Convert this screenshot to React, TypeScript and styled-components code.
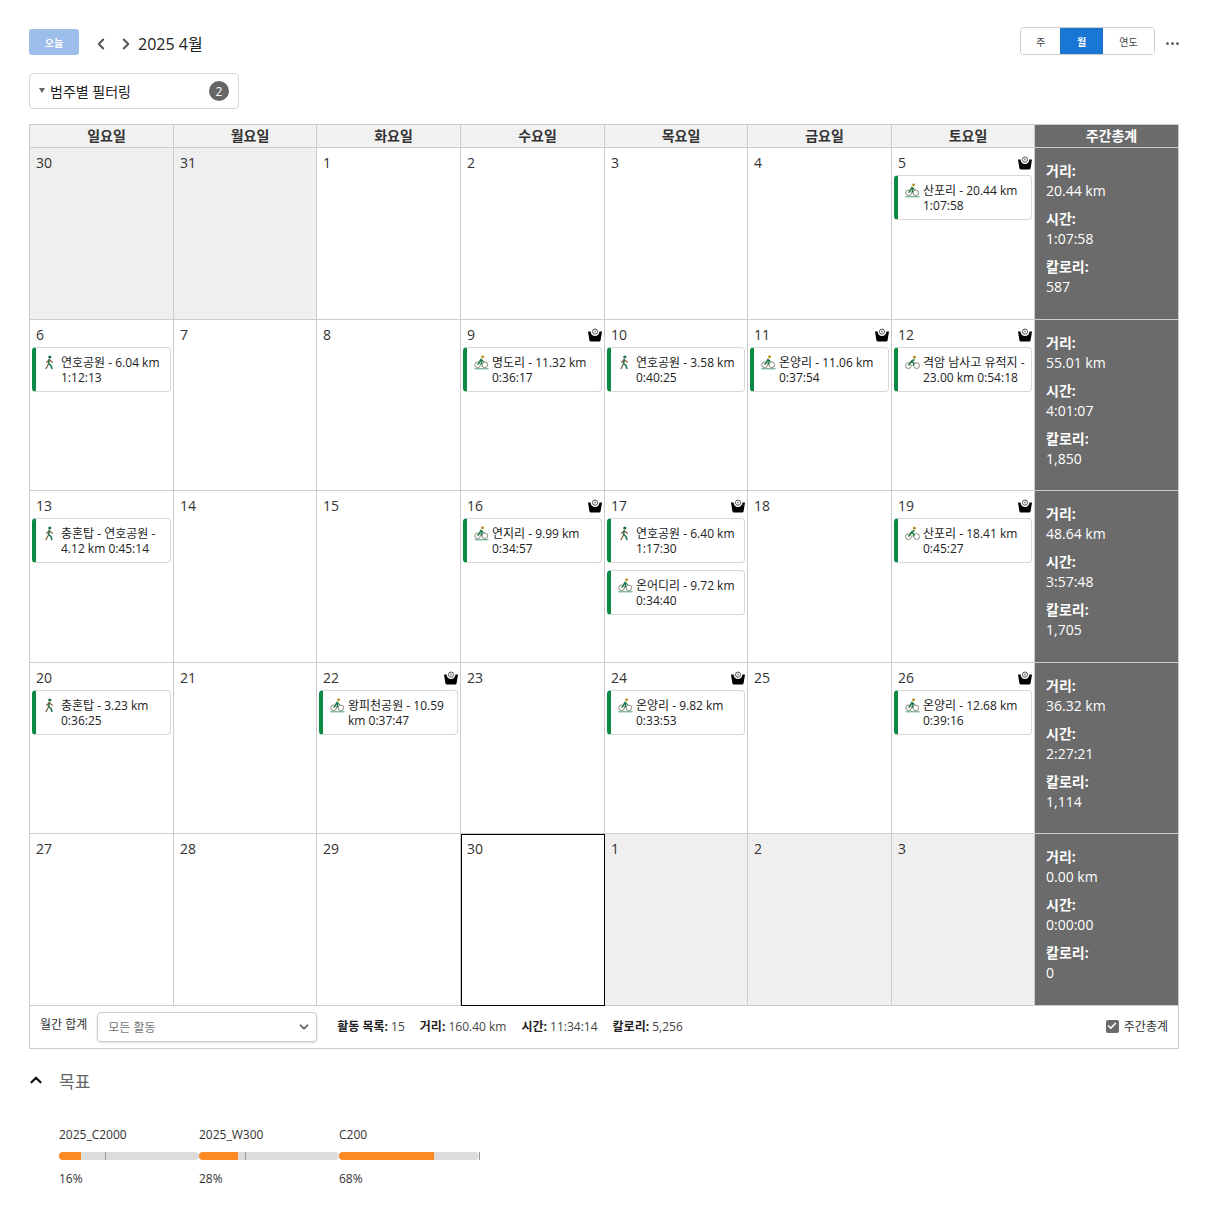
import React from "react";
import styled, { createGlobalStyle } from "styled-components";
import { ChevronLeft, ChevronRight, ChevronUp, ChevronDown, Check } from "lucide-react";

const GlobalStyle = createGlobalStyle`
  html, body {
    margin: 0;
    padding: 0;
    background: #fff;
    color: #222;
    font-family: "Open Sans", "Noto Sans CJK KR", sans-serif;
  }
`;

const Page = styled.div`
  width: 1150px;
  padding: 27px 30px 0 29px;
`;

const TopBar = styled.div`
  display: flex;
  align-items: center;
  height: 30px;
`;

const TodayButton = styled.button`
  width: 50px;
  height: 26px;
  margin: 0;
  border: none;
  border-radius: 3px;
  background: #9dbdea;
  color: #fff;
  font: 600 10px "Open Sans", "Noto Sans CJK KR", sans-serif;
  padding: 0;
`;

const NavIcon = styled.span`
  display: flex;
  width: 25px;
  justify-content: center;
  color: #555;
`;

const NavGroup = styled.div`
  display: flex;
  margin: 4px 0 0 9px;
`;

const MonthTitle = styled.h2`
  margin: 2px 0 0 0;
  font-size: 16px;
  font-weight: 400;
  color: #222;
`;

const ViewTools = styled.div`
  margin-left: auto;
  display: flex;
  align-items: center;
  margin-top: -2px;
`;

const ViewSwitch = styled.div`
  display: flex;
  height: 26px;
  border: 1px solid #ccc;
  border-radius: 4px;
  overflow: hidden;
`;

const ViewButton = styled.div<{ $active?: boolean; $w: number }>`
  width: ${(p) => p.$w}px;
  display: flex;
  align-items: center;
  justify-content: center;
  font-size: 10px;
  background: ${(p) => (p.$active ? "#1976d2" : "#fff")};
  color: ${(p) => (p.$active ? "#fff" : "#444")};
  font-weight: ${(p) => (p.$active ? 600 : 400)};
`;

const MoreDots = styled.div`
  display: flex;
  gap: 2px;
  margin-left: 11px;
  margin-top: 4px;
  width: 13px;
`;

const Dot = styled.i`
  width: 3px;
  height: 3px;
  border-radius: 50%;
  background: #666;
`;

const FilterBox = styled.div`
  box-sizing: border-box;
  width: 210px;
  height: 36px;
  margin-top: 16px;
  padding: 0 9px 0 9px;
  display: flex;
  align-items: center;
  border: 1px solid #d8d8d8;
  border-radius: 4px;
  font-size: 14px;
  color: #222;
`;

const Caret = styled.span`
  width: 0;
  height: 0;
  margin: -2px 5px 0 0;
  border-left: 3px solid transparent;
  border-right: 3px solid transparent;
  border-top: 5px solid #666;
`;

const CountBadge = styled.span`
  margin-left: auto;
  width: 20px;
  height: 20px;
  border-radius: 50%;
  background: #666;
  color: #fff;
  font-size: 12px;
  display: flex;
  align-items: center;
  justify-content: center;
`;

const Calendar = styled.div`
  margin-top: 15px;
  display: grid;
  grid-template-columns: 144px 143px 144px 144px 143px 144px 143px 143px;
  grid-template-rows: 23px 172px 171px 172px 171px 172px;
  border: solid #ccc;
  border-width: 1px 1px 0 1px;
  box-sizing: border-box;
`;

const HeadCell = styled.div<{ $dark?: boolean }>`
  display: flex;
  align-items: center;
  justify-content: center;
  padding: 0 0 3px 10px;
  font-size: 14px;
  font-weight: 600;
  box-sizing: border-box;
  border-bottom: 1px solid #ccc;
  border-right: ${(p) => (p.$dark ? "none" : "1px solid #ccc")};
  background: ${(p) => (p.$dark ? "#6b6b6b" : "#f1f1f1")};
  color: ${(p) => (p.$dark ? "#fff" : "#333")};
`;

const DayCell = styled.div<{ $muted?: boolean; $today?: boolean }>`
  box-sizing: border-box;
  min-width: 0;
  padding: 0 2px;
  background: ${(p) => (p.$muted ? "#efefef" : "#fff")};
  border-right: 1px solid #ccc;
  border-bottom: 1px solid #ccc;
  outline: ${(p) => (p.$today ? "1px solid #000" : "none")};
  outline-offset: -1px;
`;

const DayHead = styled.div`
  height: 27px;
  display: flex;
  justify-content: space-between;
  padding: 6px 0 0 4px;
  box-sizing: border-box;
  font-size: 14px;
  line-height: 18px;
  color: #333;
`;

const ScaleWrap = styled.span`
  display: flex;
  margin-top: 1px;
  margin-right: 0;
  height: 15px;
`;

const EventCard = styled.div`
  box-sizing: border-box;
  min-height: 44px;
  margin: 0 0 7px 0;
  display: flex;
  padding: 7px 4px 6px 7px;
  border: 1px solid #d8d8d8;
  border-left: 4px solid #0b8a45;
  border-radius: 4px;
  background: #fff;
  font-size: 12px;
  line-height: 15px;
  color: #222;
`;

const EventIcon = styled.span`
  flex: 0 0 17px;
  height: 15px;
  margin-left: 0;
  margin-right: 1px;
  display: flex;
`;

const EventText = styled.div`
  min-width: 0;
`;

const WeekTotal = styled.div`
  box-sizing: border-box;
  background: #6b6b6b;
  color: #fff;
  padding: 13px 11px 0;
  font-size: 14px;
  line-height: 20px;
  border-bottom: 1px solid #ccc;
`;

const TotalLabel = styled.div`
  font-weight: 700;
`;

const TotalValue = styled.div`
  margin-bottom: 8px;
`;

const Footer = styled.div`
  box-sizing: border-box;
  height: 43px;
  display: flex;
  align-items: center;
  padding: 0 10px 2px;
  border: solid #ccc;
  border-width: 0 1px 1px 1px;
  font-size: 12px;
  color: #333;
`;

const FooterLabel = styled.span`
  margin: -4px 10px 0 0;
  font-size: 12px;
`;

const ActivitySelect = styled.div`
  box-sizing: border-box;
  width: 220px;
  height: 30px;
  margin-top: 2px;
  padding: 0 5px 0 10px;
  display: flex;
  align-items: center;
  justify-content: space-between;
  border: 1px solid #ccc;
  border-radius: 4px;
  box-shadow: 0 1px 2px rgba(0, 0, 0, 0.15);
  color: #777;
  font-size: 12px;
`;

const StatGroup = styled.div`
  display: flex;
  gap: 15px;
  margin-left: 20px;
`;

const Stat = styled.span`
  color: #444;
  b {
    font-weight: 700;
    color: #222;
  }
`;

const WeekToggle = styled.label`
  margin-left: auto;
  display: flex;
  align-items: center;
  gap: 5px;
  font-size: 12px;
`;

const CheckBox = styled.span`
  width: 13px;
  height: 13px;
  border-radius: 2px;
  background: #6b6b6b;
  color: #fff;
  display: flex;
  align-items: center;
  justify-content: center;
`;

const GoalHeader = styled.div`
  display: flex;
  align-items: center;
  margin-top: 20px;
  height: 22px;
  font-size: 17px;
  color: #666;
  gap: 14px;
  svg {
    margin-left: -2px;
  }
`;

const GoalRow = styled.div`
  display: flex;
  margin: 36px 0 0 30px;
`;

const Goal = styled.div`
  width: 140px;
  font-size: 12px;
  color: #333;
`;

const GoalName = styled.div`
  line-height: 16px;
`;

const Track = styled.div`
  position: relative;
  height: 8px;
  margin: 9px 0 10px;
  background: #dcdcdc;
  border-radius: 4px;
`;

const Fill = styled.div`
  height: 100%;
  background: #fb8a24;
  border-radius: 4px 0 0 4px;
`;

const Marker = styled.i`
  position: absolute;
  top: 0;
  width: 1px;
  height: 8px;
  background: #999;
`;

const WalkIcon = () => (
  <svg width="13" height="15" viewBox="0 0 13 15" fill="none">
    <circle cx="6.8" cy="2" r="1.6" fill="#1a6b4a" />
    <path d="M6.3 4.2L5.6 8.5L8 10.5L9 14" stroke="#1a7a52" strokeWidth="1.6" />
    <path d="M5.5 9L2.8 14M6.3 4.8L3.4 7.5M6.3 4.8L9.8 7.6" stroke="#7a5a3a" strokeWidth="1.2" />
  </svg>
);

const BikeIcon = () => (
  <svg width="15" height="15" viewBox="0 0 15 15" fill="none">
    <circle cx="9.4" cy="2.2" r="1.4" fill="#b8860b" />
    <circle cx="3.4" cy="10.6" r="2.9" stroke="#8a8a7a" />
    <circle cx="11.6" cy="10.6" r="2.9" stroke="#8a8a7a" />
    <path d="M3.4 10.6L6.5 6L9.5 4.5M6.5 6L9 8.2L8 10.6" stroke="#1b7a46" strokeWidth="1.4" />
  </svg>
);

const MtbIcon = () => (
  <svg width="15" height="15" viewBox="0 0 15 15" fill="none">
    <circle cx="8.6" cy="1.8" r="1.4" fill="#b8860b" />
    <circle cx="3.6" cy="9.8" r="2.8" stroke="#8a8a7a" />
    <circle cx="10.8" cy="9.8" r="2.8" stroke="#8a8a7a" />
    <path d="M3.6 9.8L7 4.2L9.5 6.8M7 4.2L7.5 9.8" stroke="#1b7a46" strokeWidth="1.3" />
    <path d="M0.5 13.8H14.5" stroke="#4a9a78" strokeWidth="1" />
  </svg>
);

const ScaleIcon = () => (
  <svg width="14" height="15" viewBox="0 0 14 15">
    <path d="M0 4.5H14L12.6 13.2Q12.4 14.5 11 14.5H3Q1.6 14.5 1.4 13.2Z" fill="#000" />
    <circle cx="7" cy="4.6" r="4.4" fill="#fff" />
    <circle cx="7" cy="4.6" r="2.6" fill="#fff" stroke="#555" strokeWidth="1" />
    <circle cx="7" cy="4.6" r="1" fill="#888" />
    <path d="M3.4 9.5H10.6V10.4H3.4Z" fill="#000" />
  </svg>
);

type Kind = "walk" | "bike" | "mtb";
type Activity = { kind: Kind; text: string };
type Day = { n: number; muted?: boolean; today?: boolean; scale?: boolean; events?: Activity[] };
type Week = { days: Day[]; dist: string; time: string; kcal: string };

const icons = { walk: <WalkIcon />, bike: <BikeIcon />, mtb: <MtbIcon /> };

const d = (n: number, kind?: Kind, text?: string): Day =>
  kind && text ? { n, scale: true, events: [{ kind, text }] } : { n };

const weeks: Week[] = [
  {
    days: [
      { n: 30, muted: true },
      { n: 31, muted: true },
      d(1), d(2), d(3), d(4),
      d(5, "mtb", "산포리 - 20.44 km 1:07:58"),
    ],
    dist: "20.44 km", time: "1:07:58", kcal: "587",
  },
  {
    days: [
      { n: 6, events: [{ kind: "walk", text: "연호공원 - 6.04 km 1:12:13" }] },
      d(7), d(8),
      d(9, "mtb", "명도리 - 11.32 km 0:36:17"),
      { n: 10, events: [{ kind: "walk", text: "연호공원 - 3.58 km 0:40:25" }] },
      d(11, "mtb", "온양리 - 11.06 km 0:37:54"),
      d(12, "bike", "격암 남사고 유적지 - 23.00 km 0:54:18"),
    ],
    dist: "55.01 km", time: "4:01:07", kcal: "1,850",
  },
  {
    days: [
      { n: 13, events: [{ kind: "walk", text: "충혼탑 - 연호공원 - 4.12 km 0:45:14" }] },
      d(14), d(15),
      d(16, "mtb", "연지리 - 9.99 km 0:34:57"),
      {
        n: 17,
        scale: true,
        events: [
          { kind: "walk", text: "연호공원 - 6.40 km 1:17:30" },
          { kind: "mtb", text: "온어디리 - 9.72 km 0:34:40" },
        ],
      },
      d(18),
      d(19, "bike", "산포리 - 18.41 km 0:45:27"),
    ],
    dist: "48.64 km", time: "3:57:48", kcal: "1,705",
  },
  {
    days: [
      { n: 20, events: [{ kind: "walk", text: "충혼탑 - 3.23 km 0:36:25" }] },
      d(21),
      d(22, "mtb", "왕피천공원 - 10.59 km 0:37:47"),
      d(23),
      d(24, "mtb", "온양리 - 9.82 km 0:33:53"),
      d(25),
      d(26, "mtb", "온양리 - 12.68 km 0:39:16"),
    ],
    dist: "36.32 km", time: "2:27:21", kcal: "1,114",
  },
  {
    days: [
      d(27), d(28), d(29),
      { n: 30, today: true },
      { n: 1, muted: true },
      { n: 2, muted: true },
      { n: 3, muted: true },
    ],
    dist: "0.00 km", time: "0:00:00", kcal: "0",
  },
];

const dayNames = ["일요일", "월요일", "화요일", "수요일", "목요일", "금요일", "토요일"];

const goals = [
  { name: "2025_C2000", pct: 16, fill: 22, mark: 46 },
  { name: "2025_W300", pct: 28, fill: 39, mark: 46 },
  { name: "C200", pct: 68, fill: 95, mark: 140 },
];

export default function App() {
  return (
    <Page>
      <GlobalStyle />
      <TopBar>
        <TodayButton>오늘</TodayButton>
        <NavGroup>
          <NavIcon><ChevronLeft size={18} strokeWidth={2.6} /></NavIcon>
          <NavIcon><ChevronRight size={18} strokeWidth={2.6} /></NavIcon>
        </NavGroup>
        <MonthTitle>2025 4월</MonthTitle>
        <ViewTools>
          <ViewSwitch>
            <ViewButton $w={39}>주</ViewButton>
            <ViewButton $w={43} $active>월</ViewButton>
            <ViewButton $w={51}>연도</ViewButton>
          </ViewSwitch>
          <MoreDots><Dot /><Dot /><Dot /></MoreDots>
        </ViewTools>
      </TopBar>
      <FilterBox>
        <Caret />
        범주별 필터링
        <CountBadge>2</CountBadge>
      </FilterBox>
      <Calendar>
        {dayNames.map((name) => (
          <HeadCell key={name}>{name}</HeadCell>
        ))}
        <HeadCell $dark>주간총계</HeadCell>
        {weeks.map((week, i) => (
          <React.Fragment key={i}>
            {week.days.map((day, j) => (
              <DayCell key={j} $muted={day.muted} $today={day.today}>
                <DayHead>
                  {day.n}
                  {day.scale && <ScaleWrap><ScaleIcon /></ScaleWrap>}
                </DayHead>
                {day.events?.map((ev) => (
                  <EventCard key={ev.text}>
                    <EventIcon>{icons[ev.kind]}</EventIcon>
                    <EventText>{ev.text}</EventText>
                  </EventCard>
                ))}
              </DayCell>
            ))}
            <WeekTotal>
              <TotalLabel>거리:</TotalLabel>
              <TotalValue>{week.dist}</TotalValue>
              <TotalLabel>시간:</TotalLabel>
              <TotalValue>{week.time}</TotalValue>
              <TotalLabel>칼로리:</TotalLabel>
              <TotalValue>{week.kcal}</TotalValue>
            </WeekTotal>
          </React.Fragment>
        ))}
      </Calendar>
      <Footer>
        <FooterLabel>월간 합계</FooterLabel>
        <ActivitySelect>
          모든 활동
          <ChevronDown size={14} strokeWidth={3} color="#555" />
        </ActivitySelect>
        <StatGroup>
          <Stat><b>활동 목록:</b> 15</Stat>
          <Stat><b>거리:</b> 160.40 km</Stat>
          <Stat><b>시간:</b> 11:34:14</Stat>
          <Stat><b>칼로리:</b> 5,256</Stat>
        </StatGroup>
        <WeekToggle>
          <CheckBox><Check size={10} strokeWidth={4} /></CheckBox>
          주간총계
        </WeekToggle>
      </Footer>
      <GoalHeader>
        <ChevronUp size={18} strokeWidth={3} color="#111" />
        목표
      </GoalHeader>
      <GoalRow>
        {goals.map((g) => (
          <Goal key={g.name}>
            <GoalName>{g.name}</GoalName>
            <Track>
              <Fill style={{ width: g.fill }} />
              <Marker style={{ left: g.mark }} />
            </Track>
            {g.pct}%
          </Goal>
        ))}
      </GoalRow>
    </Page>
  );
}
